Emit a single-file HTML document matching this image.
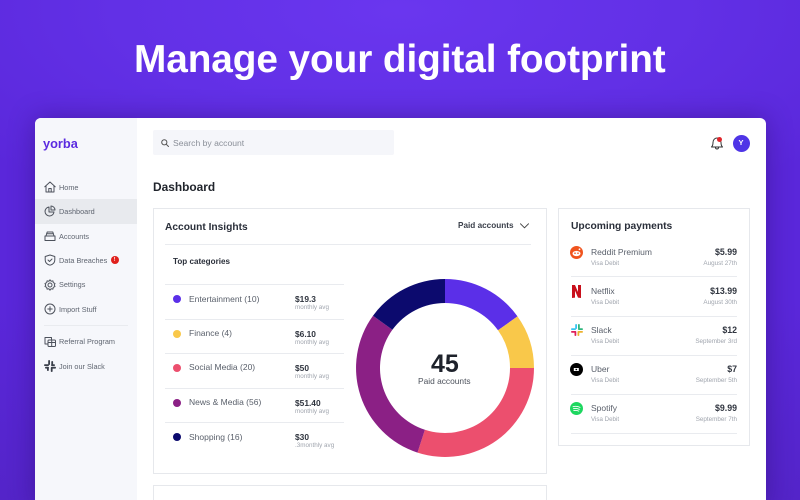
<!DOCTYPE html>
<html><head><meta charset="utf-8"><style>
html,body{margin:0;padding:0;width:800px;height:500px;overflow:hidden}
body{font-family:"Liberation Sans",sans-serif}
#w{position:absolute;left:0;top:0;width:800px;height:500px;overflow:hidden;background:#5a26dc}
.bg{position:absolute;inset:0;background:radial-gradient(ellipse 560px 220px at 400px 10px,#6a36ef 0%,#6230e6 50%,#5a27da 100%)}
.bg2{position:absolute;left:0;top:300px;width:800px;height:200px;background:linear-gradient(180deg,rgba(70,30,160,0),rgba(70,30,160,.3))}
.t{position:absolute;white-space:nowrap;line-height:1}
.r{position:absolute;}
.h{left:134px;top:40.500px;font-size:38.8px;font-weight:bold;color:#fff;letter-spacing:-.1px}
.card{position:absolute;left:35px;top:118px;width:731px;height:390px;background:#fff;border-radius:6px;box-shadow:0 0 26px rgba(40,10,100,.42)}
.side{position:absolute;left:35px;top:118px;width:102px;height:382px;background:#f6f7fb;border-radius:6px 0 0 0}
.nav{font-size:7.3px;color:#5f6570;left:59px}
.cat{font-size:8.5px;color:#5a606b;left:189px}
.amt{font-size:8.4px;font-weight:bold;color:#30353f;left:295px;margin-top:.5px}
.avg{font-size:6.3px;color:#a0a5ae;left:295px;margin-top:.5px}
.line{position:absolute;height:1px;background:#e9ebef}
.dot{position:absolute;width:8px;height:8px;border-radius:50%;left:173px}
.box{position:absolute;background:#fff;border:1px solid #e6e8ec;box-sizing:border-box}
.pn{font-size:8.5px;color:#5a606b;left:591px}
.ps{font-size:6.2px;color:#a0a5ae;left:591px}
.pa{font-size:8.8px;font-weight:bold;color:#30353f;right:63px}
.pd{font-size:6.3px;color:#a0a5ae;right:63px}
svg{position:absolute;overflow:visible}
.ic{fill:none;stroke:#4d525c;stroke-width:1;stroke-linejoin:round;stroke-linecap:round}
</style></head><body><div id="w">
<div class="bg"></div><div class="bg2"></div>
<div class="t h">Manage your digital footprint</div>
<div class="card"></div>
<div class="side"></div>
<div class="r" style="left:35px;top:199px;width:102px;height:25px;background:#e8eaee"></div>
<div class="t" style="left:43px;top:138px;font-size:12.8px;font-weight:bold;color:#5b2be0">yorba</div>

<svg class="ic" style="left:44px;top:181px" width="12" height="12" viewBox="0 0 12 12"><path d="M.8 5.8 6 1l5.200 4.800M2 4.900V11h8V4.900M4.800 11V7.500h2.400V11"/></svg>
<div class="t nav" style="top:183.500px">Home</div>
<svg class="ic" style="left:44px;top:205px" width="12" height="12" viewBox="0 0 12 12"><path d="M5 2a4.500 4.500 0 1 0 5 5H5z"/><path d="M7 1a4 4 0 0 1 4 4H7z"/></svg>
<div class="t nav" style="top:207.500px">Dashboard</div>
<svg class="ic" style="left:44px;top:230px" width="12" height="12" viewBox="0 0 12 12"><path d="M1 6h10v4.500H1zM2 6l1.200-4h5.600L10 6M2.500 3.800h7"/></svg>
<div class="t nav" style="top:232.500px">Accounts</div>
<svg class="ic" style="left:44px;top:254px" width="12" height="12" viewBox="0 0 12 12"><path d="M6 1 1.200 2.500V6c0 2.800 2.200 4.500 4.800 5.200 2.600-.7 4.800-2.400 4.800-5.200V2.500z"/><path d="m4 6 1.500 1.500L8 5"/></svg>
<div class="t nav" style="top:256.500px">Data Breaches</div>
<div class="r" style="left:111px;top:256px;width:8px;height:8px;border-radius:50%;background:#e0201c"></div>
<div class="t" style="left:113.800px;top:257.500px;font-size:5.500px;font-weight:bold;color:#fff">!</div>
<svg class="ic" style="left:44px;top:279px" width="12" height="12" viewBox="0 0 12 12"><circle cx="6" cy="6" r="2"/><path d="M6 .8 7.100 2.200 8.900 1.900 9.300 3.700 11 4.400 10.300 6 11 7.600 9.300 8.300 8.900 10.100 7.100 9.800 6 11.200 4.900 9.800 3.100 10.100 2.700 8.300 1 7.600 1.700 6 1 4.400 2.700 3.700 3.100 1.900 4.900 2.200z"/></svg>
<div class="t nav" style="top:281px">Settings</div>
<svg class="ic" style="left:44px;top:303px" width="12" height="12" viewBox="0 0 12 12"><circle cx="6" cy="6" r="5"/><path d="M6 3.800v4.400M3.800 6h4.400"/></svg>
<div class="t nav" style="top:305.500px">Import Stuff</div>
<div class="line" style="left:44px;top:325px;width:84px"></div>
<svg class="ic" style="left:44px;top:336px" width="12" height="12" viewBox="0 0 12 12"><path d="M1 1.500h6.500v2M1 1.500V8h2.500"/><rect x="4" y="4" width="7.500" height="6.500" rx="1"/><path d="M7.700 4v6.500M4 6.500h7.500"/></svg>
<div class="t nav" style="top:338px">Referral Program</div>
<svg style="left:44px;top:360px" width="12" height="12" viewBox="0 0 12 12" fill="#3a3f4a"><rect x="4.200" y="0" width="1.800" height="5" rx=".9"/><rect x="6.800" y="7" width="1.800" height="5" rx=".9"/><rect x="0" y="4.200" width="5" height="1.800" rx=".9"/><rect x="7" y="6.800" width="5" height="1.800" rx=".9"/><rect x="7.300" y="1" width="1.800" height="4" rx=".9"/><rect x="3" y="7" width="1.800" height="4" rx=".9"/><rect x="7" y="4.200" width="4" height="1.800" rx=".9"/><rect x="1" y="6.800" width="4" height="1.800" rx=".9"/></svg>
<div class="t nav" style="top:362.500px">Join our Slack</div>

<div class="r" style="left:153px;top:130px;width:241px;height:25px;background:#f5f6fa;border-radius:2px"></div>
<svg class="ic" style="left:161px;top:138.500px;stroke:#555" width="8" height="8" viewBox="0 0 8 8"><circle cx="3.300" cy="3.300" r="2.600"/><path d="m5.300 5.300 2.200 2.200"/></svg>
<div class="t" style="left:173px;top:138.500px;font-size:8.600px;color:#8a8f98">Search by account</div>

<svg class="ic" style="left:710px;top:136px;stroke:#333" width="14" height="14" viewBox="0 0 14 14"><path d="M1.500 11c1.200-1.200 1.500-2 1.500-4.500C3 4 4.700 2 7 2s4 2 4 4.500c0 2.500.3 3.300 1.500 4.500zM5.500 11.500a1.500 1.500 0 0 0 3 0"/></svg>
<div class="r" style="left:717px;top:137px;width:5px;height:5px;border-radius:50%;background:#e0242a"></div>
<div class="r" style="left:733px;top:134.500px;width:17px;height:17px;border-radius:50%;background:#4f35e6"></div>
<div class="t" style="left:738.500px;top:139px;font-size:7.500px;font-weight:bold;color:#fff">Y</div>

<div class="t" style="left:153px;top:182px;font-size:11.900px;font-weight:bold;color:#20242c">Dashboard</div>

<div class="box" style="left:153px;top:208px;width:394px;height:266px"></div>
<div class="t" style="left:165px;top:222.500px;font-size:10.200px;font-weight:bold;color:#2a2f3a">Account Insights</div>
<div class="t" style="left:458px;top:222px;font-size:8.200px;font-weight:bold;color:#3a3f4a">Paid accounts</div>
<svg class="ic" style="left:520px;top:223px;stroke:#444" width="9" height="6" viewBox="0 0 9 6"><path d="m.5.800 4 4 4-4"/></svg>
<div class="line" style="left:165px;top:244px;width:366px"></div>
<div class="t" style="left:173px;top:257.500px;font-size:8.100px;font-weight:bold;color:#2a2f3a">Top categories</div>

<div class="line" style="left:165px;top:284px;width:179px"></div>
<div class="dot" style="top:295px;background:#5b2fe8"></div>
<div class="t cat" style="top:294.500px">Entertainment (10)</div>
<div class="t amt" style="top:294px">$19.3</div>
<div class="t avg" style="top:304.500px">monthly avg</div>
<div class="line" style="left:165px;top:319px;width:179px"></div>
<div class="dot" style="top:330px;background:#f9c84a"></div>
<div class="t cat" style="top:329px">Finance (4)</div>
<div class="t amt" style="top:329px">$6.10</div>
<div class="t avg" style="top:339.500px">monthly avg</div>
<div class="line" style="left:165px;top:353px;width:179px"></div>
<div class="dot" style="top:364px;background:#ec4f6e"></div>
<div class="t cat" style="top:363px">Social Media (20)</div>
<div class="t amt" style="top:363px">$50</div>
<div class="t avg" style="top:373.500px">monthly avg</div>
<div class="line" style="left:165px;top:388px;width:179px"></div>
<div class="dot" style="top:398.500px;background:#8b2085"></div>
<div class="t cat" style="top:398px">News &amp; Media (56)</div>
<div class="t amt" style="top:398px">$51.40</div>
<div class="t avg" style="top:408px">monthly avg</div>
<div class="line" style="left:165px;top:422px;width:179px"></div>
<div class="dot" style="top:433px;background:#0c0a6e"></div>
<div class="t cat" style="top:432.500px">Shopping (16)</div>
<div class="t amt" style="top:432.500px">$30</div>
<div class="t avg" style="top:442.500px">.3monthly avg</div>

<svg style="left:356px;top:279px" width="178" height="178" viewBox="-89 -89 178 178">
<path d="M0-89A89 89 0 0 1 72.500-51.600L53-37.700A65 65 0 0 0 0-65z" fill="#5b2fe8"/>
<path d="M72.500-51.600A89 89 0 0 1 89 0H65A65 65 0 0 0 53-37.700z" fill="#f9c84a"/>
<path d="M89 0A89 89 0 0 1-27.500 84.600L-20.100 61.800A65 65 0 0 0 65 0z" fill="#ec4f6e"/>
<path d="M-27.500 84.600A89 89 0 0 1-72-52.300L-52.600-38.200A65 65 0 0 0-20.100 61.800z" fill="#8b2085"/>
<path d="M-72-52.300A89 89 0 0 1 0-89V-65A65 65 0 0 0-52.600-38.200z" fill="#0c0a6e"/>
</svg>
<div class="t" style="left:431px;top:352px;font-size:25px;font-weight:bold;color:#1e222b">45</div>
<div class="t" style="left:418px;top:376.500px;font-size:8.400px;color:#4d525c">Paid accounts</div>

<div class="box" style="left:558px;top:208px;width:192px;height:238px"></div>
<div class="t" style="left:571px;top:222px;font-size:10.300px;font-weight:bold;color:#2a2f3a">Upcoming payments</div>

<svg style="left:570px;top:246px" width="13" height="13" viewBox="0 0 13 13"><circle cx="6.500" cy="6.500" r="6.500" fill="#f0541e"/><ellipse cx="6.500" cy="7.500" rx="4" ry="2.600" fill="#fff"/><circle cx="5" cy="7.200" r=".8" fill="#f0541e"/><circle cx="8" cy="7.200" r=".8" fill="#f0541e"/><circle cx="9.500" cy="3.300" r=".9" fill="#fff"/></svg>
<div class="t pn" style="top:247.500px">Reddit Premium</div>
<div class="t ps" style="top:260.500px">Visa Debit</div>
<div class="t pa" style="top:247.500px">$5.99</div>
<div class="t pd" style="top:260.500px">August 27th</div>
<div class="line" style="left:571px;top:276px;width:166px"></div>

<svg style="left:572px;top:285px" width="9" height="13" viewBox="0 0 9 13"><path d="M0 0h3l3 7V0h3v13l-3-.4-3-7V12.600L0 13z" fill="#c8101c"/></svg>
<div class="t pn" style="top:287px">Netflix</div>
<div class="t ps" style="top:299.500px">Visa Debit</div>
<div class="t pa" style="top:287px">$13.99</div>
<div class="t pd" style="top:299.500px">August 30th</div>
<div class="line" style="left:571px;top:316px;width:166px"></div>

<svg style="left:571px;top:324px" width="12" height="12" viewBox="0 0 12 12"><rect x="4.200" y="0" width="1.800" height="5" rx=".9" fill="#36c5f0"/><rect x="0" y="4.200" width="5" height="1.800" rx=".9" fill="#36c5f0"/><rect x="7" y="4.200" width="5" height="1.800" rx=".9" fill="#2eb67d"/><rect x="7" y="0" width="1.800" height="5" rx=".9" fill="#2eb67d"/><rect x="6.500" y="7" width="1.800" height="5" rx=".9" fill="#ecb22e"/><rect x="7" y="7" width="5" height="1.800" rx=".9" fill="#ecb22e"/><rect x="0" y="7" width="5" height="1.800" rx=".9" fill="#e01e5a"/><rect x="3.500" y="7" width="1.800" height="5" rx=".9" fill="#e01e5a"/></svg>
<div class="t pn" style="top:326px">Slack</div>
<div class="t ps" style="top:338.500px">Visa Debit</div>
<div class="t pa" style="top:326px">$12</div>
<div class="t pd" style="top:338.500px">September 3rd</div>
<div class="line" style="left:571px;top:355px;width:166px"></div>

<svg style="left:570px;top:363px" width="13" height="13" viewBox="0 0 13 13"><circle cx="6.500" cy="6.500" r="6.500" fill="#000"/><rect x="3.800" y="5" width="5" height="3" fill="#fff"/><rect x="5.500" y="5.800" width="1.600" height="1.400" fill="#000"/></svg>
<div class="t pn" style="top:365px">Uber</div>
<div class="t ps" style="top:377.500px">Visa Debit</div>
<div class="t pa" style="top:365px">$7</div>
<div class="t pd" style="top:377.500px">September 5th</div>
<div class="line" style="left:571px;top:394px;width:166px"></div>

<svg style="left:570px;top:402px" width="13" height="13" viewBox="0 0 13 13"><circle cx="6.500" cy="6.500" r="6.500" fill="#1ed760"/><path d="M3 4.700c2.300-.6 4.800-.4 7 .7M3.400 6.700c2-.5 4-.3 6 .6M3.800 8.600c1.700-.4 3.400-.2 5 .5" fill="none" stroke="#fff" stroke-width=".9" stroke-linecap="round"/></svg>
<div class="t pn" style="top:404px">Spotify</div>
<div class="t ps" style="top:416.500px">Visa Debit</div>
<div class="t pa" style="top:404px">$9.99</div>
<div class="t pd" style="top:416.500px">September 7th</div>
<div class="line" style="left:571px;top:433px;width:166px"></div>

<div class="box" style="left:153px;top:485px;width:394px;height:40px"></div>
</div></body></html>
